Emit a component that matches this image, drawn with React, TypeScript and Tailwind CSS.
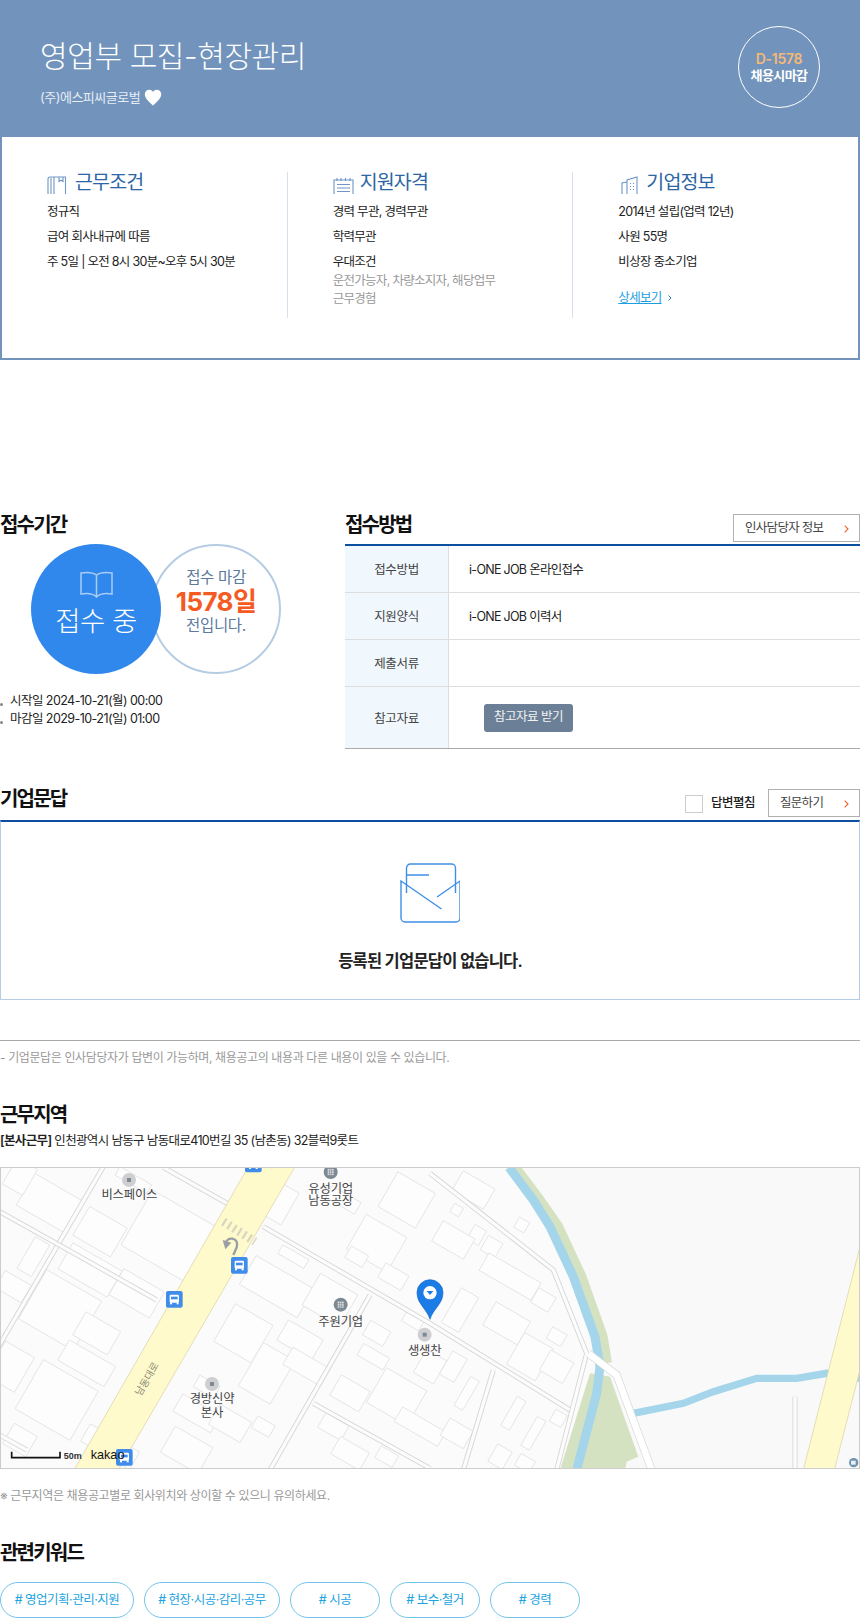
import React from "react";

const Chevron = () => (
  <svg width="5" height="8" viewBox="0 0 5 8" fill="none" stroke="#f0622a" strokeWidth="1.1">
    <path d="M0.700 0.700l3.300 3.300-3.300 3.300" />
  </svg>
);

const Title = ({ children }: { children: React.ReactNode }) => (
  <h3 className="h-[30px] text-[20px] leading-[32px] font-semibold tracking-[-1.8px] text-[#111]">{children}</h3>
);

const OutlineBtn = ({ label, w }: { label: string; w: string }) => (
  <div className={`${w} flex h-[28px] items-center justify-between border border-[#b0b0b0] bg-white pl-[11px] pr-[10px] pt-px text-[12.5px] tracking-[-0.7px] text-[#444]`}>
    <span>{label}</span>
    <Chevron />
  </div>
);

const ICON = "#6f96c4";

const BookIcon = () => (
  <svg width="20" height="18" viewBox="0 0 20 18" fill="none" stroke={ICON} strokeWidth="1.1">
    <path d="M1 18V3a2 2 0 0 1 2-2h15.500v17M7 18V1M12 1v4.500l2 -1.300 2 1.300V1" />
    <path d="M4 18V2" />
  </svg>
);
const CalIcon = () => (
  <svg width="21" height="18" viewBox="0 0 21 18" fill="none" stroke={ICON} strokeWidth="1.1">
    <path d="M1 18V4h19v14M4 2v3M8 2v3M12.500 2v3M17 2v3M4 8.500h13M4 12h13M4 15.500h13" />
  </svg>
);
const BuildingIcon = () => (
  <svg width="18" height="18" viewBox="0 0 18 18" fill="none" stroke={ICON} strokeWidth="1.1">
    <path d="M1 18V7l5-1M6 18V4l10-3v17M9 7.500h1M12 7.500h1M9 10.500h1M12 10.500h1M9 13.500h1M12 13.500h1" />
  </svg>
);

const CardCol = ({ icon, title, gap, children, last }: { icon: React.ReactNode; title: string; gap: string; children: React.ReactNode; last?: boolean }) => (
  <div className={`h-[146px] flex-1 pl-[45px] ${last ? "" : "border-r border-[#d5e0ec]"}`}>
    <div className={`flex h-[22px] items-end ${gap}`}>
      {icon}
      <span className="text-[19.5px] leading-[23px] tracking-[-0.85px] text-[#2c66a6]">{title}</span>
    </div>
    <div className="mt-[5px] text-[12.5px] leading-[25px] tracking-[-0.7px] text-[#222]">{children}</div>
  </div>
);

const Row = ({ label, children, h, last }: { label: string; children?: React.ReactNode; h: string; last?: boolean }) => (
  <div className={`flex ${h} border-b ${last ? "border-[#aaaaaa]" : "border-[#dddddd]"}`}>
    <div className="flex w-[104px] items-center justify-center border-r border-[#dddddd] bg-[#f0f7fd] pt-[3px] text-[12.5px] tracking-[-0.35px] text-[#444]">{label}</div>
    <div className="flex flex-1 items-center pl-5 pt-[3px] text-[12.5px] tracking-[-0.7px] text-[#222]">{children}</div>
  </div>
);

const Keyword = ({ label, w }: { label: string; w: string }) => (
  <div className={`${w} flex h-[36px] items-center justify-center rounded-[18px] border border-[#72c4ec] text-[12.5px] tracking-[-0.5px] text-[#1ba3e0]`}>{label}</div>
);

const buildings: [number, number, number, number][] = [
  [150, 130, 170, 110], [60, 50, 70, 90], [300, 215, 130, 100], [510, 230, 230, 190], [270, 330, 170, 90], [410, 400, 140, 90],
  [180, 450, 190, 170], [290, 520, 120, 80], [260, 610, 160, 70], [170, 720, 190, 170], [100, 290, 50, 110], [330, 860, 170, 60],
  [60, 840, 80, 70], [40, 380, 90, 60], [30, 620, 100, 120], [400, 60, 110, 30],
  [840, 130, 70, 110], [1130, 250, 140, 120], [1220, 120, 130, 120], [1070, 290, 60, 40], [1180, 350, 80, 50], [880, 290, 90, 30],
  [830, 380, 200, 100], [990, 420, 130, 110], [730, 520, 130, 130], [900, 540, 120, 70], [620, 680, 70, 40], [800, 640, 110, 150],
  [590, 760, 130, 60], [560, 870, 130, 90], [690, 790, 110, 70], [790, 800, 60, 40], [920, 620, 130, 60], [1050, 700, 100, 70],
  [1190, 710, 140, 120], [1260, 800, 150, 50], [1000, 800, 80, 50], [1050, 880, 100, 60], [1160, 890, 60, 40], [1130, 520, 70, 50],
  [1120, 590, 90, 40], [1240, 480, 60, 40], [1030, 120, 100, 40], [1290, 620, 70, 80],
  [1420, 90, 110, 70], [1370, 150, 30, 30], [1565, 195, 35, 35], [1430, 225, 40, 50], [1360, 240, 110, 70], [1475, 260, 50, 50],
  [1530, 350, 180, 60], [1380, 450, 60, 120], [1520, 490, 120, 80], [1630, 420, 60, 50], [1590, 590, 100, 110], [1670, 620, 80, 70],
  [1670, 530, 50, 40], [1360, 620, 50, 80], [1400, 700, 30, 100], [1540, 760, 30, 100], [1600, 820, 30, 100], [1675, 775, 40, 40],
  [1500, 890, 50, 60], [1575, 910, 50, 40], [1370, 820, 80, 60],
];

const roads = [
  "M-10 570 L310 20",
  "M790 200 L1290 490 L1710 750",
  "M490 22 L690 135",
  "M1290 40 L1660 330 L1760 580 L1670 930",
  "M1110 405 L810 930",
  "M940 730 L1290 925",
  "M1480 630 L1390 930",
  "M-10 150 L240 290 L470 420",
  "M-10 820 L80 870",
];

const Bus = ({ x, y }: { x: number; y: number }) => (
  <g transform={`translate(${x} ${y})`}>
    <rect x="-25" y="-25" width="50" height="50" rx="6" fill="#3f8cea" />
    <rect x="-14" y="-14" width="28" height="24" rx="4" fill="#fff" />
    <rect x="-10" y="-8" width="20" height="8" fill="#3f8cea" />
    <rect x="-13" y="9" width="6" height="6" fill="#fff" />
    <rect x="7" y="9" width="6" height="6" fill="#fff" />
  </g>
);

const Poi = ({ x, y, b }: { x: number; y: number; b?: boolean }) => (
  <g>
    <circle cx={x} cy={y} r="21" fill={b ? "#7d8a94" : "#cfcfd2"} />
    {b ? (
      <path d={`M${x - 10} ${y - 10}h20v20h-20zM${x - 10} ${y - 3}h20M${x - 10} ${y + 4}h20M${x - 3} ${y - 10}v20M${x + 3} ${y - 10}v20`} fill="#e8e8e8" stroke="#7d8a94" strokeWidth="2" />
    ) : (
      <rect x={x - 6} y={y - 6} width="12" height="12" fill="#7d8a94" />
    )}
  </g>
);

const Label = ({ x, y, children }: { x: number; y: number; children: string }) => (
  <text x={x} y={y} textAnchor="middle" fontSize="37" fill="#444" fontFamily="'Noto Sans CJK KR',sans-serif" letterSpacing="-0.5">
    {children}
  </text>
);

const KakaoMap = () => (
  <svg className="block h-full w-full" viewBox="3 24 2574 900" preserveAspectRatio="none">
    <rect x="0" y="0" width="2600" height="1000" fill="#f9f9f9" />
    <path d="M0 0H1500L1660 200L1730 400L1780 600L1680 930H0Z" fill="#fbfbfb" />
    {/* park */}
    <path d="M1538 22L1612 120L1668 200L1738 350L1802 530L1815 610" fill="none" stroke="#d5e2c2" strokeWidth="42" />
    <path d="M1680 930L1770 640L1830 650L1915 890L1880 905L1875 930Z" fill="#d5e2c2" />
    {/* river */}
    <path d="M1527 22L1600 120L1650 200L1720 350L1785 530L1800 620L1790 700L1730 930" fill="none" stroke="#a5d5ea" strokeWidth="27" />
    <path d="M1900 760L2050 730L2140 695L2270 655L2390 655L2480 640L2580 655" fill="none" stroke="#a5d5ea" strokeWidth="22" />
    {buildings.map(([x, y, w, h], i) => (
      <rect key={i} x={x - w / 2} y={y - h / 2} width={w} height={h} fill="#fdfdfd" stroke="#e3e3e3" strokeWidth="2.5" transform={`rotate(30 ${x} ${y})`} />
    ))}
    {roads.map((d, i) => (
      <g key={i} fill="none">
        <path d={d} stroke="#d4d4d4" strokeWidth="15" />
        <path d={d} stroke="#fcfcfc" strokeWidth="10" />
      </g>
    ))}
    <path d="M1765 580L1850 645L1955 930" fill="none" stroke="#d8d8d8" strokeWidth="24" />
    <path d="M1765 580L1850 645L1955 930" fill="none" stroke="#ffffff" strokeWidth="20" />
    <path d="M2385 710V930" fill="none" stroke="#d4d4d4" strokeWidth="15" />
    <path d="M2385 710V930" fill="none" stroke="#fcfcfc" strokeWidth="10" />
    {/* yellow roads */}
    <path d="M745 20H885L355 930H222Z" fill="#fefacb" stroke="#ddd8ae" strokeWidth="2.5" />
    <path d="M2410 930H2503L2590 590V220Z" fill="#fefacb" stroke="#ddd8ae" strokeWidth="2.5" />
    <path d="M670 185L765 245" fill="none" stroke="#d9d6c0" strokeWidth="26" strokeDasharray="7 11" />
    <path d="M700 285L710 262Q716 240 697 236Q682 234 676 250" fill="none" stroke="#9a9ea6" strokeWidth="7" />
    <path d="M668 240L676 268L694 248Z" fill="#9a9ea6" />
    <text x="0" y="0" fontSize="30" fill="#8d8b78" textAnchor="middle" fontFamily="'Noto Sans CJK KR',sans-serif" transform="translate(450 662) rotate(-60)">남동대로</text>
    <Bus x={760} y={12} />
    <Bus x={718} y={316} />
    <Bus x={523} y={418} />
    <Bus x={373} y={892} />
    <Poi x={387} y={60} />
    <Label x={388} y={118}>비스페이스</Label>
    <Poi x={992} y={36} b />
    <Label x={992} y={98}>유성기업</Label>
    <Label x={992} y={136}>남동공장</Label>
    <Poi x={1022} y={434} b />
    <Label x={1022} y={497}>주원기업</Label>
    <Poi x={636} y={672} />
    <Label x={636} y={730}>경방신약</Label>
    <Label x={636} y={772}>본사</Label>
    <Poi x={1274} y={524} />
    <Label x={1274} y={585}>생생찬</Label>
    <circle cx="2561" cy="908" r="14" fill="#6e93ad" />
    <rect x="2553" y="902" width="14" height="12" fill="#e8eef2" />
    {/* pin */}
    <path d="M1290 478C1280 445 1251 432 1251 398A39 39 0 0 1 1329 398C1329 432 1300 445 1290 478Z" fill="#1b7ce6" stroke="#1468c8" strokeWidth="2" />
    <circle cx="1290" cy="398" r="20" fill="#fff" />
    <path d="M1280 393H1300L1290 405Z" fill="#1b7ce6" />
    {/* scale */}
    <path d="M35 875V893H180V875" fill="none" stroke="#111" strokeWidth="5" />
    <text x="191" y="896" fontSize="27" fontWeight="600" fill="#333" fontFamily="'Liberation Sans',sans-serif">50m</text>
    <text x="272" y="896" fontSize="38" fill="#111" fontFamily="'Liberation Sans',sans-serif">kakao</text>
  </svg>
);

export default function App() {
  return (
    <div className="w-[860px] bg-white font-['Inter','Noto_Sans_CJK_KR',sans-serif] text-[#222]">
      <header className="flex h-[137px] justify-between bg-[#7294bc] pl-[40px] pr-[40px]">
        <div className="pt-[34px]">
          <h1 className="text-[30px] leading-[44px] font-light tracking-[-0.4px] text-white">영업부 모집-현장관리</h1>
          <div className="mt-[9px] flex items-center gap-[4px]">
            <span className="text-[13px] leading-[20px] tracking-[-0.5px] text-[#e6edf5]">(주)에스피씨글로벌</span>
            <svg width="18" height="17" viewBox="0 0 24 22" fill="#fff">
              <path d="M12 22C10 19 1 13.500 1 6.800 1 3 3.800 0.500 6.900 0.500 9 0.500 11 1.600 12 3.600 13 1.600 15 0.500 17.100 0.500 20.200 0.500 23 3 23 6.800 23 13.500 14 19 12 22Z" />
            </svg>
          </div>
        </div>
        <div className="mt-[26px] flex h-[82px] w-[82px] flex-col items-center justify-center rounded-full border border-white">
          <span className="text-[14px] leading-[16px] font-semibold tracking-[-0.3px] text-[#f5b976]">D-1578</span>
          <span className="text-[13px] leading-[16px] font-semibold tracking-[-0.55px] text-white">채용시마감</span>
        </div>
      </header>

      <section className="flex h-[223px] border-x-2 border-b-2 border-[#7294bc] pt-[35px]">
        <CardCol icon={<BookIcon />} title="근무조건" gap="gap-[8px]">
          <div>정규직</div>
          <div>급여 회사내규에 따름</div>
          <div>주 5일 | 오전 8시 30분~오후 5시 30분</div>
        </CardCol>
        <CardCol icon={<CalIcon />} title="지원자격" gap="gap-[6px]">
          <div>경력 무관, 경력무관</div>
          <div>학력무관</div>
          <div>우대조건</div>
          <div className="-mt-[2px] leading-[18px] text-[#999]">
            운전가능자, 차량소지자, 해당업무
            <br />
            근무경험
          </div>
        </CardCol>
        <CardCol icon={<div className="ml-[3px]"><BuildingIcon /></div>} title="기업정보" gap="gap-[7px]" last>
          <div>2014년 설립(업력 12년)</div>
          <div>사원 55명</div>
          <div>비상장 중소기업</div>
          <div className="mt-[11px] flex items-center gap-[6px]">
            <span className="text-[#1c9ee0] underline">상세보기</span>
            <svg width="4" height="6" viewBox="0 0 4 6" fill="none" stroke="#1c7fc0" strokeWidth="1">
              <path d="M0.500 0.500l2.500 2.500-2.500 2.500" />
            </svg>
          </div>
        </CardCol>
      </section>

      <section className="mt-[149px] flex">
        <div className="w-[345px]">
          <Title>접수기간</Title>
          <div className="mt-[5px] flex pl-[31px]">
            <div className="relative z-10 flex h-[130px] w-[130px] flex-col items-center rounded-full bg-[#3188ec] pt-[27px] text-white">
              <svg width="33" height="27" viewBox="0 0 33 27" fill="none" stroke="#a7cdf6" strokeWidth="1.5">
                <path d="M16.500 4C13 1.500 7 1 1 2V23C7 22 13 22.500 16.500 26 20 22.500 26 22 32 23V2C26 1 20 1.500 16.500 4ZM16.500 4V26" />
              </svg>
              <span className="mt-[4px] text-[27.5px] leading-[38px] font-light tracking-[-0.5px]">접수 중</span>
            </div>
            <div className="-ml-[10px] flex h-[130px] w-[130px] flex-col items-center justify-center rounded-full border-2 border-[#b5cce3] pb-[14px] text-[15.5px] tracking-[-0.35px] text-[#5b7a9d]">
              <span className="leading-[18px]">접수 마감</span>
              <span className="my-[2px] text-[26px] leading-[26px] font-bold tracking-[-0.6px] text-[#f55a23]">1578일</span>
              <span className="leading-[18px]">전입니다.</span>
            </div>
          </div>
          <ul className="mt-[18px] text-[12.5px] leading-[18px] tracking-[-0.55px] text-[#222]">
            {["시작일 2024-10-21(월) 00:00", "마감일 2029-10-21(일) 01:00"].map((t) => (
              <li key={t} className="flex items-center gap-[7px]">
                <span className="mt-[6px] h-[3px] w-[3px] rounded-full bg-[#888]" />
                {t}
              </li>
            ))}
          </ul>
        </div>
        <div className="flex-1">
          <div className="flex h-[35px] justify-between">
            <Title>접수방법</Title>
            <div className="pt-[5px]">
              <OutlineBtn label="인사담당자 정보" w="w-[127px]" />
            </div>
          </div>
          <div className="border-t-2 border-[#0c4f9e]">
            <Row label="접수방법" h="h-[47px]">i-ONE JOB 온라인접수</Row>
            <Row label="지원양식" h="h-[47px]">i-ONE JOB 이력서</Row>
            <Row label="제출서류" h="h-[47px]" />
            <Row label="참고자료" h="h-[62px]" last>
              <div className="-mt-[3px] ml-[15px] flex h-[28px] w-[89px] items-center justify-center rounded-[3px] bg-[#6b8096] tracking-[-0.5px] text-[#f2f2f2]">참고자료 받기</div>
            </Row>
          </div>
        </div>
      </section>

      <section className="mt-[34px]">
        <div className="flex h-[37px] justify-between">
          <Title>기업문답</Title>
          <div className="flex pt-[6px]">
            <div className="mr-[8px] mt-[6px] h-[18px] w-[18px] border border-[#cccccc]" />
            <span className="mr-[13px] text-[12.5px] leading-[28px] font-medium tracking-[-0.5px] text-[#222]">답변펼침</span>
            <OutlineBtn label="질문하기" w="w-[92px]" />
          </div>
        </div>
        <div className="flex h-[180px] flex-col items-center border-x border-b border-[#b5cce3] border-t-2 border-t-[#0c4f9e] pt-[41px]">
          <svg width="60" height="60" viewBox="0 0 60 60" fill="none" stroke="#3f8fe6" strokeWidth="1.4">
            <path d="M6.500 30V5a4 4 0 0 1 4-4h41a4 4 0 0 1 4 4v25M6.500 12H29" />
            <path d="M41.500 46L1 18V55a4 4 0 0 0 4 4h51a4 4 0 0 0 4-4V18L37 34" />
          </svg>
          <p className="mt-[26px] text-[16.5px] leading-[24px] font-semibold tracking-[-0.8px] text-[#222]">등록된 기업문답이 없습니다.</p>
        </div>
      </section>

      <div className="mt-[40px] border-t border-[#aaaaaa] pt-[7px] text-[12px] leading-[20px] tracking-[-0.38px] text-[#999]">- 기업문답은 인사담당자가 답변이 가능하며, 채용공고의 내용과 다른 내용이 있을 수 있습니다.</div>

      <section className="mt-[31px]">
        <Title>근무지역</Title>
        <p className="mt-[2px] text-[12.5px] leading-[20px] tracking-[-0.65px] text-[#222]">
          <b className="font-semibold">[본사근무]</b> 인천광역시 남동구 남동대로410번길 35 (남촌동) 32블럭9롯트
        </p>
        <div className="mt-[16px] h-[302px] border border-[#cccccc]">
          <KakaoMap />
        </div>
        <p className="mt-[17px] text-[12px] leading-[20px] tracking-[-0.38px] text-[#999]">※ 근무지역은 채용공고별로 회사위치와 상이할 수 있으니 유의하세요.</p>
      </section>

      <section className="mt-[31px]">
        <Title>관련키워드</Title>
        <div className="mt-[15px] flex gap-[10px]">
          <Keyword label="# 영업기획·관리·지원" w="w-[134px]" />
          <Keyword label="# 현장·시공·감리·공무" w="w-[136px]" />
          <Keyword label="# 시공" w="w-[90px]" />
          <Keyword label="# 보수·철거" w="w-[90px]" />
          <Keyword label="# 경력" w="w-[90px]" />
        </div>
      </section>
    </div>
  );
}
